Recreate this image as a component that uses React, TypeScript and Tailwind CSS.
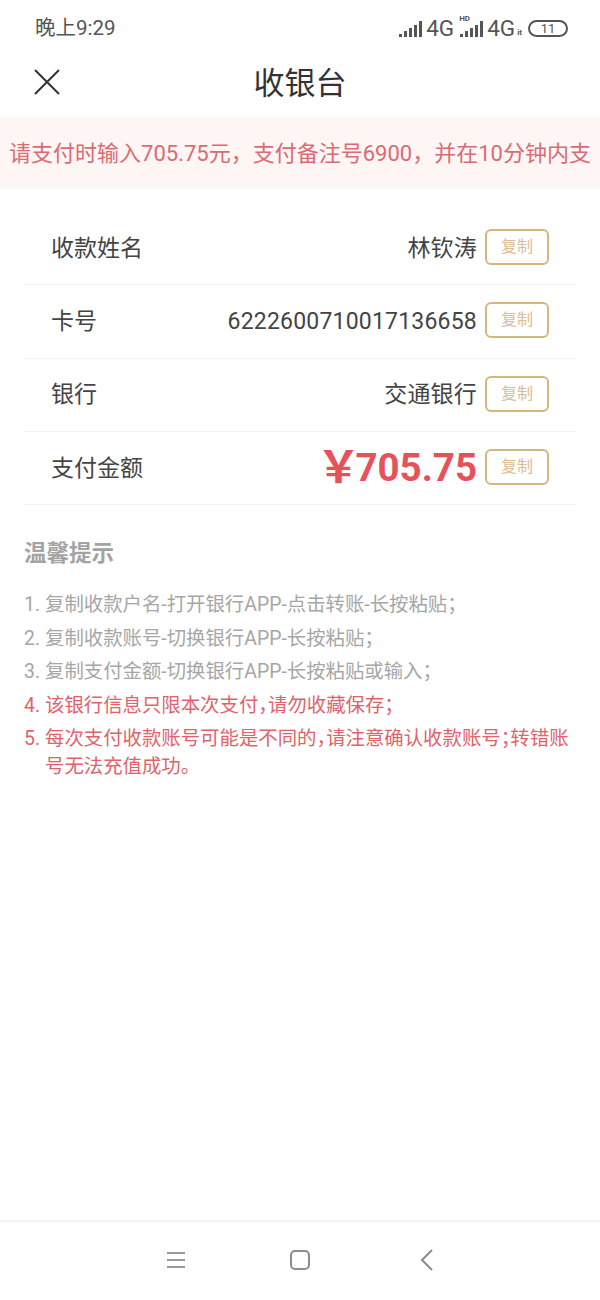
const font = "font-['Roboto','Noto_Sans_CJK_SC',sans-serif]";

function Signal({ className }: { className?: string }) {
  return (
    <svg width="24" height="18" viewBox="0 0 24 18" className={className} fill="#555555">
      <rect x="1" y="14" width="3" height="3" />
      <rect x="6" y="11" width="3" height="6" />
      <rect x="11" y="8" width="3" height="9" />
      <rect x="16" y="5" width="3" height="12" />
      <rect x="21" y="1" width="3" height="16" />
    </svg>
  );
}

function Row({ label, value, amount }: { label: string; value?: string; amount?: boolean }) {
  return (
    <div className="flex h-[73.3px] items-center border-b border-[#f2f2f2] pl-[27px] pr-[27px]">
      <span className="mt-[2px] flex-1 text-[23px] text-[#444444]">{label}</span>
      {amount ? (
        <span className="flex items-center text-[38.5px] font-bold leading-none text-[#e5525a]">
          <span className="mr-[-5px] text-[44px] leading-none">￥</span>705.75
        </span>
      ) : (
        <span className="mt-[2px] text-[23px] tracking-[0.2px] text-[#444444]">{value}</span>
      )}
      <button className="mt-[-2px] ml-2 flex h-[36px] w-[64px] items-center justify-center rounded-[6px] border-2 border-[#d4b77f] text-[16px] text-[#d8bd95]">
        复制
      </button>
    </div>
  );
}

const tips = [
  { text: "复制收款户名-打开银行APP-点击转账-长按粘贴；" },
  { text: "复制收款账号-切换银行APP-长按粘贴；" },
  { text: "复制支付金额-切换银行APP-长按粘贴或输入；" },
  { text: "该银行信息只限本次支付，请勿收藏保存；", red: true },
  { text: "每次支付收款账号可能是不同的，请注意确认收款账号；转错账号无法充值成功。", red: true },
];

export default function App() {
  return (
    <div className={`flex h-[1300px] w-[600px] flex-col overflow-hidden bg-white ${font}`}>
      {/* 状态栏 */}
      <div className="flex h-[57px] items-center justify-between pl-[35px] pr-[32px]">
        <span className="text-[20.5px] text-[#555555]">晚上9:29</span>
        <div className="flex items-center text-[#555555]">
          <Signal />
          <span className="ml-[4px] text-[22.5px]">4G</span>
          <div className="relative ml-[5px]">
            <span className="absolute left-0 top-[-5px] text-[8px] font-bold leading-none">HD</span>
            <Signal />
          </div>
          <span className="ml-[4px] text-[22.5px]">4G</span>
          <span className="ml-[2px] mt-[8px] text-[8px] font-bold">it</span>
          <div className="ml-[6px] flex h-[17px] w-[40px] items-center justify-center rounded-full border-2 border-[#555555] text-[13px] leading-none">
            11
          </div>
        </div>
      </div>

      {/* 标题栏 */}
      <div className="relative flex h-[60px] items-center justify-center">
        <svg width="26" height="26" viewBox="0 0 26 26" className="absolute left-[34px] top-[12px]" fill="none" stroke="#333333" strokeWidth="2">
          <path d="M1 1L25 25M25 1L1 25" />
        </svg>
        <span className="mt-[-6px] text-[31px] text-[#333333]">收银台</span>
      </div>

      {/* 提示条 */}
      <div className="flex h-[72px] items-center justify-center overflow-hidden bg-[#fef5f5] whitespace-nowrap text-[22px] text-[#dc6a72]">
        请支付时输入705.75元，支付备注号6900，并在10分钟内支
      </div>

      {/* 收款信息 */}
      <div className="mx-[24px] mt-[23px]">
        <Row label="收款姓名" value="林钦涛" />
        <Row label="卡号" value="6222600710017136658" />
        <Row label="银行" value="交通银行" />
        <Row label="支付金额" amount />
      </div>

      {/* 温馨提示 */}
      <div className="mx-[24px] mt-[33px] flex-1">
        <h2 className="text-[22.5px] font-bold leading-[30px] text-[#a3a3a3]">温馨提示</h2>
        <ol className="mt-[23px] [font-feature-settings:'halt']">
          {tips.map((tip, i) => (
            <li key={i} className={`mb-[5.5px] flex text-[19.4px] leading-[28px] ${tip.red ? "text-[#e0636b]" : "text-[#a6a6a6]"}`}>
              <span className="w-[21px] shrink-0">{i + 1}.</span>
              <span>{tip.text}</span>
            </li>
          ))}
        </ol>
      </div>

      {/* 底部导航 */}
      <div className="flex h-[80px] items-center border-t-2 border-[#f2f2f2]">
        <div className="ml-[166px] mt-[-2px]">
          <svg width="20" height="18" viewBox="0 0 20 18" fill="none" stroke="#999999" strokeWidth="2">
            <path d="M1 2H19M1 9H19M1 16H19" />
          </svg>
        </div>
        <div className="ml-[104px] mt-[-2px]">
          <svg width="20" height="20" viewBox="0 0 20 20" fill="none" stroke="#8c8c8c" strokeWidth="2">
            <rect x="1" y="1" width="18" height="18" rx="4" />
          </svg>
        </div>
        <div className="ml-[110px] mt-[-2px]">
          <svg width="14" height="22" viewBox="0 0 14 22" fill="none" stroke="#8c8c8c" strokeWidth="2">
            <path d="M12 1L2 11L12 21" />
          </svg>
        </div>
      </div>
    </div>
  );
}
